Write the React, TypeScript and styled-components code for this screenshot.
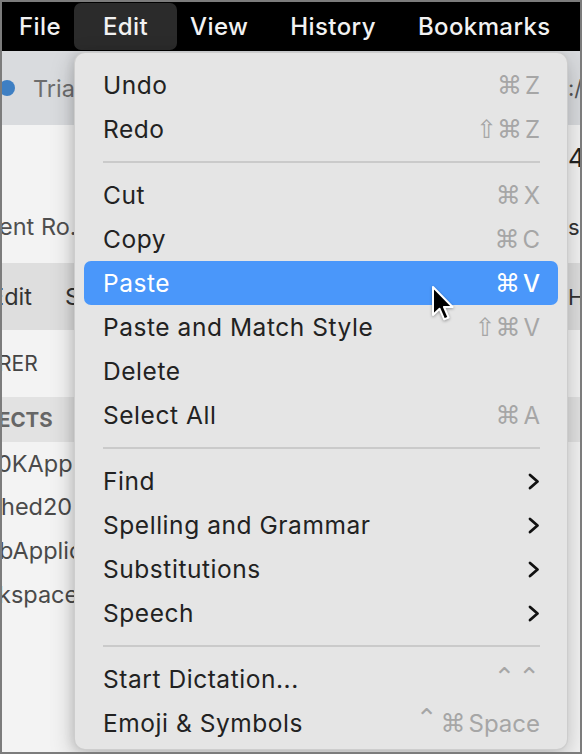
import React from "react";
import styled, { createGlobalStyle, css } from "styled-components";

const GlobalStyle = createGlobalStyle`
  html, body { margin: 0; padding: 0; background: #7c7c7c; }
  * { box-sizing: border-box; }
`;

const FONT = `"Inter", "DejaVu Sans", "Liberation Sans", sans-serif`;

const Frame = styled.div`
  position: relative;
  width: 582px;
  height: 754px;
  border: 2px solid #7c7c7c;
  overflow: hidden;
  display: flex;
  flex-direction: column;
  font-family: ${FONT};
  background: #f3f3f3;
`;

const MenuBar = styled.div`
  height: 49px;
  flex: none;
  background: #000;
  display: flex;
  align-items: stretch;
  gap: 42px;
  padding-left: 17px;
`;

const MenuTitle = styled.div<{ $active?: boolean }>`
  position: relative;
  display: flex;
  align-items: center;
  color: #f2f2f2;
  font-size: 24px;
  font-weight: 500;
  letter-spacing: 0.4px;
  & > span { position: relative; z-index: 1; }
  ${(p) =>
    p.$active &&
    css`
      &::before {
        content: "";
        position: absolute;
        top: 1px;
        bottom: 1px;
        left: -29px;
        right: -29px;
        border-radius: 7px;
        background: #2b2b2b;
      }
    `}
`;

const Window = styled.div`
  flex: 1;
  display: flex;
  flex-direction: column;
`;

type Tone = "band" | "plain" | "dark" | "section";
const toneColor: Record<Tone, string> = {
  band: "#d9dbde",
  plain: "#f3f3f3",
  dark: "#dedede",
  section: "#e2e2e2",
};

const Row = styled.div<{ $h: number; $tone: Tone }>`
  height: ${(p) => p.$h}px;
  flex: none;
  display: grid;
  grid-template-columns: 1fr 12px;
  align-items: center;
  background: ${(p) => toneColor[p.$tone]};
  overflow: hidden;
`;

const Filler = styled.div`
  flex: 1;
  background: #f3f3f3;
`;

const LeftCell = styled.div<{ $shift: number; $bold?: boolean; $size?: number; $color?: string }>`
  display: flex;
  align-items: center;
  gap: 18px;
  white-space: nowrap;
  margin-left: ${(p) => p.$shift}px;
  font-size: ${(p) => p.$size ?? 23.5}px;
  font-weight: ${(p) => (p.$bold ? 700 : 400)};
  color: ${(p) => p.$color ?? "#4a4a4a"};
`;

const RightCell = styled.div<{ $size?: number; $color?: string }>`
  overflow: hidden;
  white-space: nowrap;
  font-size: ${(p) => p.$size ?? 22}px;
  color: ${(p) => p.$color ?? "#333"};
`;

const Dot = styled.span`
  width: 16px;
  height: 16px;
  border-radius: 50%;
  background: #3e7fc3;
  flex: none;
`;

const Gap = styled.span<{ $w: number }>`
  display: inline-block;
  width: ${(p) => p.$w}px;
`;

const Dropdown = styled.div`
  position: absolute;
  left: 72px;
  top: 50px;
  width: 494px;
  height: 698px;
  background: #e5e5e5;
  border-radius: 11px;
  border: 1px solid rgba(0, 0, 0, 0.1);
  box-shadow: 0 8px 24px rgba(0, 0, 0, 0.22), -3px 0 8px rgba(0, 0, 0, 0.08);
  padding: 10px 9px 6px;
  display: flex;
  flex-direction: column;
`;

const Item = styled.div<{ $active?: boolean }>`
  height: 44px;
  flex: none;
  display: flex;
  align-items: center;
  justify-content: space-between;
  padding: 0 18px 0 19px;
  border-radius: 7px;
  font-size: 24.5px;
  letter-spacing: 0.55px;
  color: ${(p) => (p.$active ? "#fff" : "#222")};
  background: ${(p) => (p.$active ? "#4a97fa" : "transparent")};
`;

const Separator = styled.div`
  height: 22px;
  flex: none;
  display: flex;
  align-items: center;
  padding: 0 18px 0 19px;
  &::after {
    content: "";
    flex: 1;
    height: 2px;
    background: #cacaca;
  }
`;

const Shortcut = styled.span<{ $active?: boolean }>`
  display: flex;
  align-items: center;
  gap: 3px;
  font-size: 24px;
  letter-spacing: 0;
  color: ${(p) => (p.$active ? "#fff" : "#a6a6a6")};
  font-weight: ${(p) => (p.$active ? 500 : 400)};
`;

const Mod = styled.span`
  font-family: "DejaVu Sans", sans-serif;
  font-size: 25px;
`;

const Caret = styled.span`
  font-family: "DejaVu Sans", sans-serif;
  font-size: 26px;
  line-height: 1;
  align-self: flex-start;
  margin-top: -4px;
`;

const Chevron = () => (
  <svg width="12" height="17" viewBox="0 0 12 17" fill="none">
    <path d="M2 2 L9.5 8.5 L2 15" stroke="#111" strokeWidth="2.8" strokeLinecap="round" strokeLinejoin="round" />
  </svg>
);

const CursorWrap = styled.div`
  position: absolute;
  left: 429px;
  top: 283px;
  filter: drop-shadow(0 1px 1.5px rgba(0, 0, 0, 0.35));
`;

const Cursor = () => (
  <CursorWrap>
    <svg width="26" height="38" viewBox="0 0 26 38">
      <path
        d="M2 2 L2 30 L8.6 23.8 L13.2 34.4 L17.6 32.5 L13 22 L21.6 22 Z"
        fill="#000"
        stroke="#fff"
        strokeWidth="2"
        strokeLinejoin="round"
      />
    </svg>
  </CursorWrap>
);

type Entry =
  | { kind: "sep" }
  | { kind: "item"; label: string; mods?: string; key?: string; sub?: boolean; active?: boolean; special?: "dict" | "emoji" };

const entries: Entry[] = [
  { kind: "item", label: "Undo", mods: "⌘", key: "Z" },
  { kind: "item", label: "Redo", mods: "⇧⌘", key: "Z" },
  { kind: "sep" },
  { kind: "item", label: "Cut", mods: "⌘", key: "X" },
  { kind: "item", label: "Copy", mods: "⌘", key: "C" },
  { kind: "item", label: "Paste", mods: "⌘", key: "V", active: true },
  { kind: "item", label: "Paste and Match Style", mods: "⇧⌘", key: "V" },
  { kind: "item", label: "Delete" },
  { kind: "item", label: "Select All", mods: "⌘", key: "A" },
  { kind: "sep" },
  { kind: "item", label: "Find", sub: true },
  { kind: "item", label: "Spelling and Grammar", sub: true },
  { kind: "item", label: "Substitutions", sub: true },
  { kind: "item", label: "Speech", sub: true },
  { kind: "sep" },
  { kind: "item", label: "Start Dictation...", special: "dict" },
  { kind: "item", label: "Emoji & Symbols", special: "emoji" },
];

function renderShortcut(e: Extract<Entry, { kind: "item" }>) {
  if (e.sub) return <Chevron />;
  if (e.special === "dict")
    return (
      <Shortcut>
        <Caret>⌃</Caret>
        <Caret>⌃</Caret>
      </Shortcut>
    );
  if (e.special === "emoji")
    return (
      <Shortcut>
        <Caret>⌃</Caret>
        <Mod>⌘</Mod>
        <span>Space</span>
      </Shortcut>
    );
  if (!e.key) return null;
  return (
    <Shortcut $active={e.active}>
      <Mod>{e.mods}</Mod>
      <span>{e.key}</span>
    </Shortcut>
  );
}

export default function App() {
  return (
    <>
      <GlobalStyle />
      <Frame>
        <MenuBar>
          <MenuTitle><span>File</span></MenuTitle>
          <MenuTitle $active><span>Edit</span></MenuTitle>
          <MenuTitle><span>View</span></MenuTitle>
          <MenuTitle><span>History</span></MenuTitle>
          <MenuTitle><span>Bookmarks</span></MenuTitle>
        </MenuBar>
        <Window>
          <Row $h={74} $tone="band">
            <LeftCell $shift={-3} $color="#6d6d6d">
              <Dot />
              <span>Trial</span>
            </LeftCell>
            <RightCell $color="#555">:/</RightCell>
          </Row>
          <Row $h={65} $tone="plain">
            <LeftCell $shift={0}> </LeftCell>
            <RightCell $size={26} $color="#222">4.</RightCell>
          </Row>
          <Row $h={73} $tone="plain">
            <LeftCell $shift={-3} $color="#4f4f4f">ent Ro...</LeftCell>
            <RightCell $color="#333">si</RightCell>
          </Row>
          <Row $h={67} $tone="dark">
            <LeftCell $shift={-12} $color="#333">
              <span>Edit<Gap $w={33} />S</span>
            </LeftCell>
            <RightCell $color="#333">H</RightCell>
          </Row>
          <Row $h={67} $tone="plain">
            <LeftCell $shift={-4} $size={21} $color="#444">RER</LeftCell>
            <RightCell> </RightCell>
          </Row>
          <Row $h={45} $tone="section">
            <LeftCell $shift={-4} $size={20.5} $bold $color="#666">ECTS</LeftCell>
            <RightCell> </RightCell>
          </Row>
          <Row $h={42} $tone="plain">
            <LeftCell $shift={-5}>0KApp</LeftCell>
            <RightCell> </RightCell>
          </Row>
          <Row $h={44} $tone="plain">
            <LeftCell $shift={-1}>hed20</LeftCell>
            <RightCell> </RightCell>
          </Row>
          <Row $h={44} $tone="plain">
            <LeftCell $shift={-3}>bApplication</LeftCell>
            <RightCell> </RightCell>
          </Row>
          <Row $h={45} $tone="plain">
            <LeftCell $shift={-4}>kspace</LeftCell>
            <RightCell> </RightCell>
          </Row>
          <Filler />
        </Window>

        <Dropdown>
          {entries.map((e, i) =>
            e.kind === "sep" ? (
              <Separator key={i} />
            ) : (
              <Item key={i} $active={e.active}>
                <span>{e.label}</span>
                {renderShortcut(e)}
              </Item>
            )
          )}
        </Dropdown>
        <Cursor />
      </Frame>
    </>
  );
}
